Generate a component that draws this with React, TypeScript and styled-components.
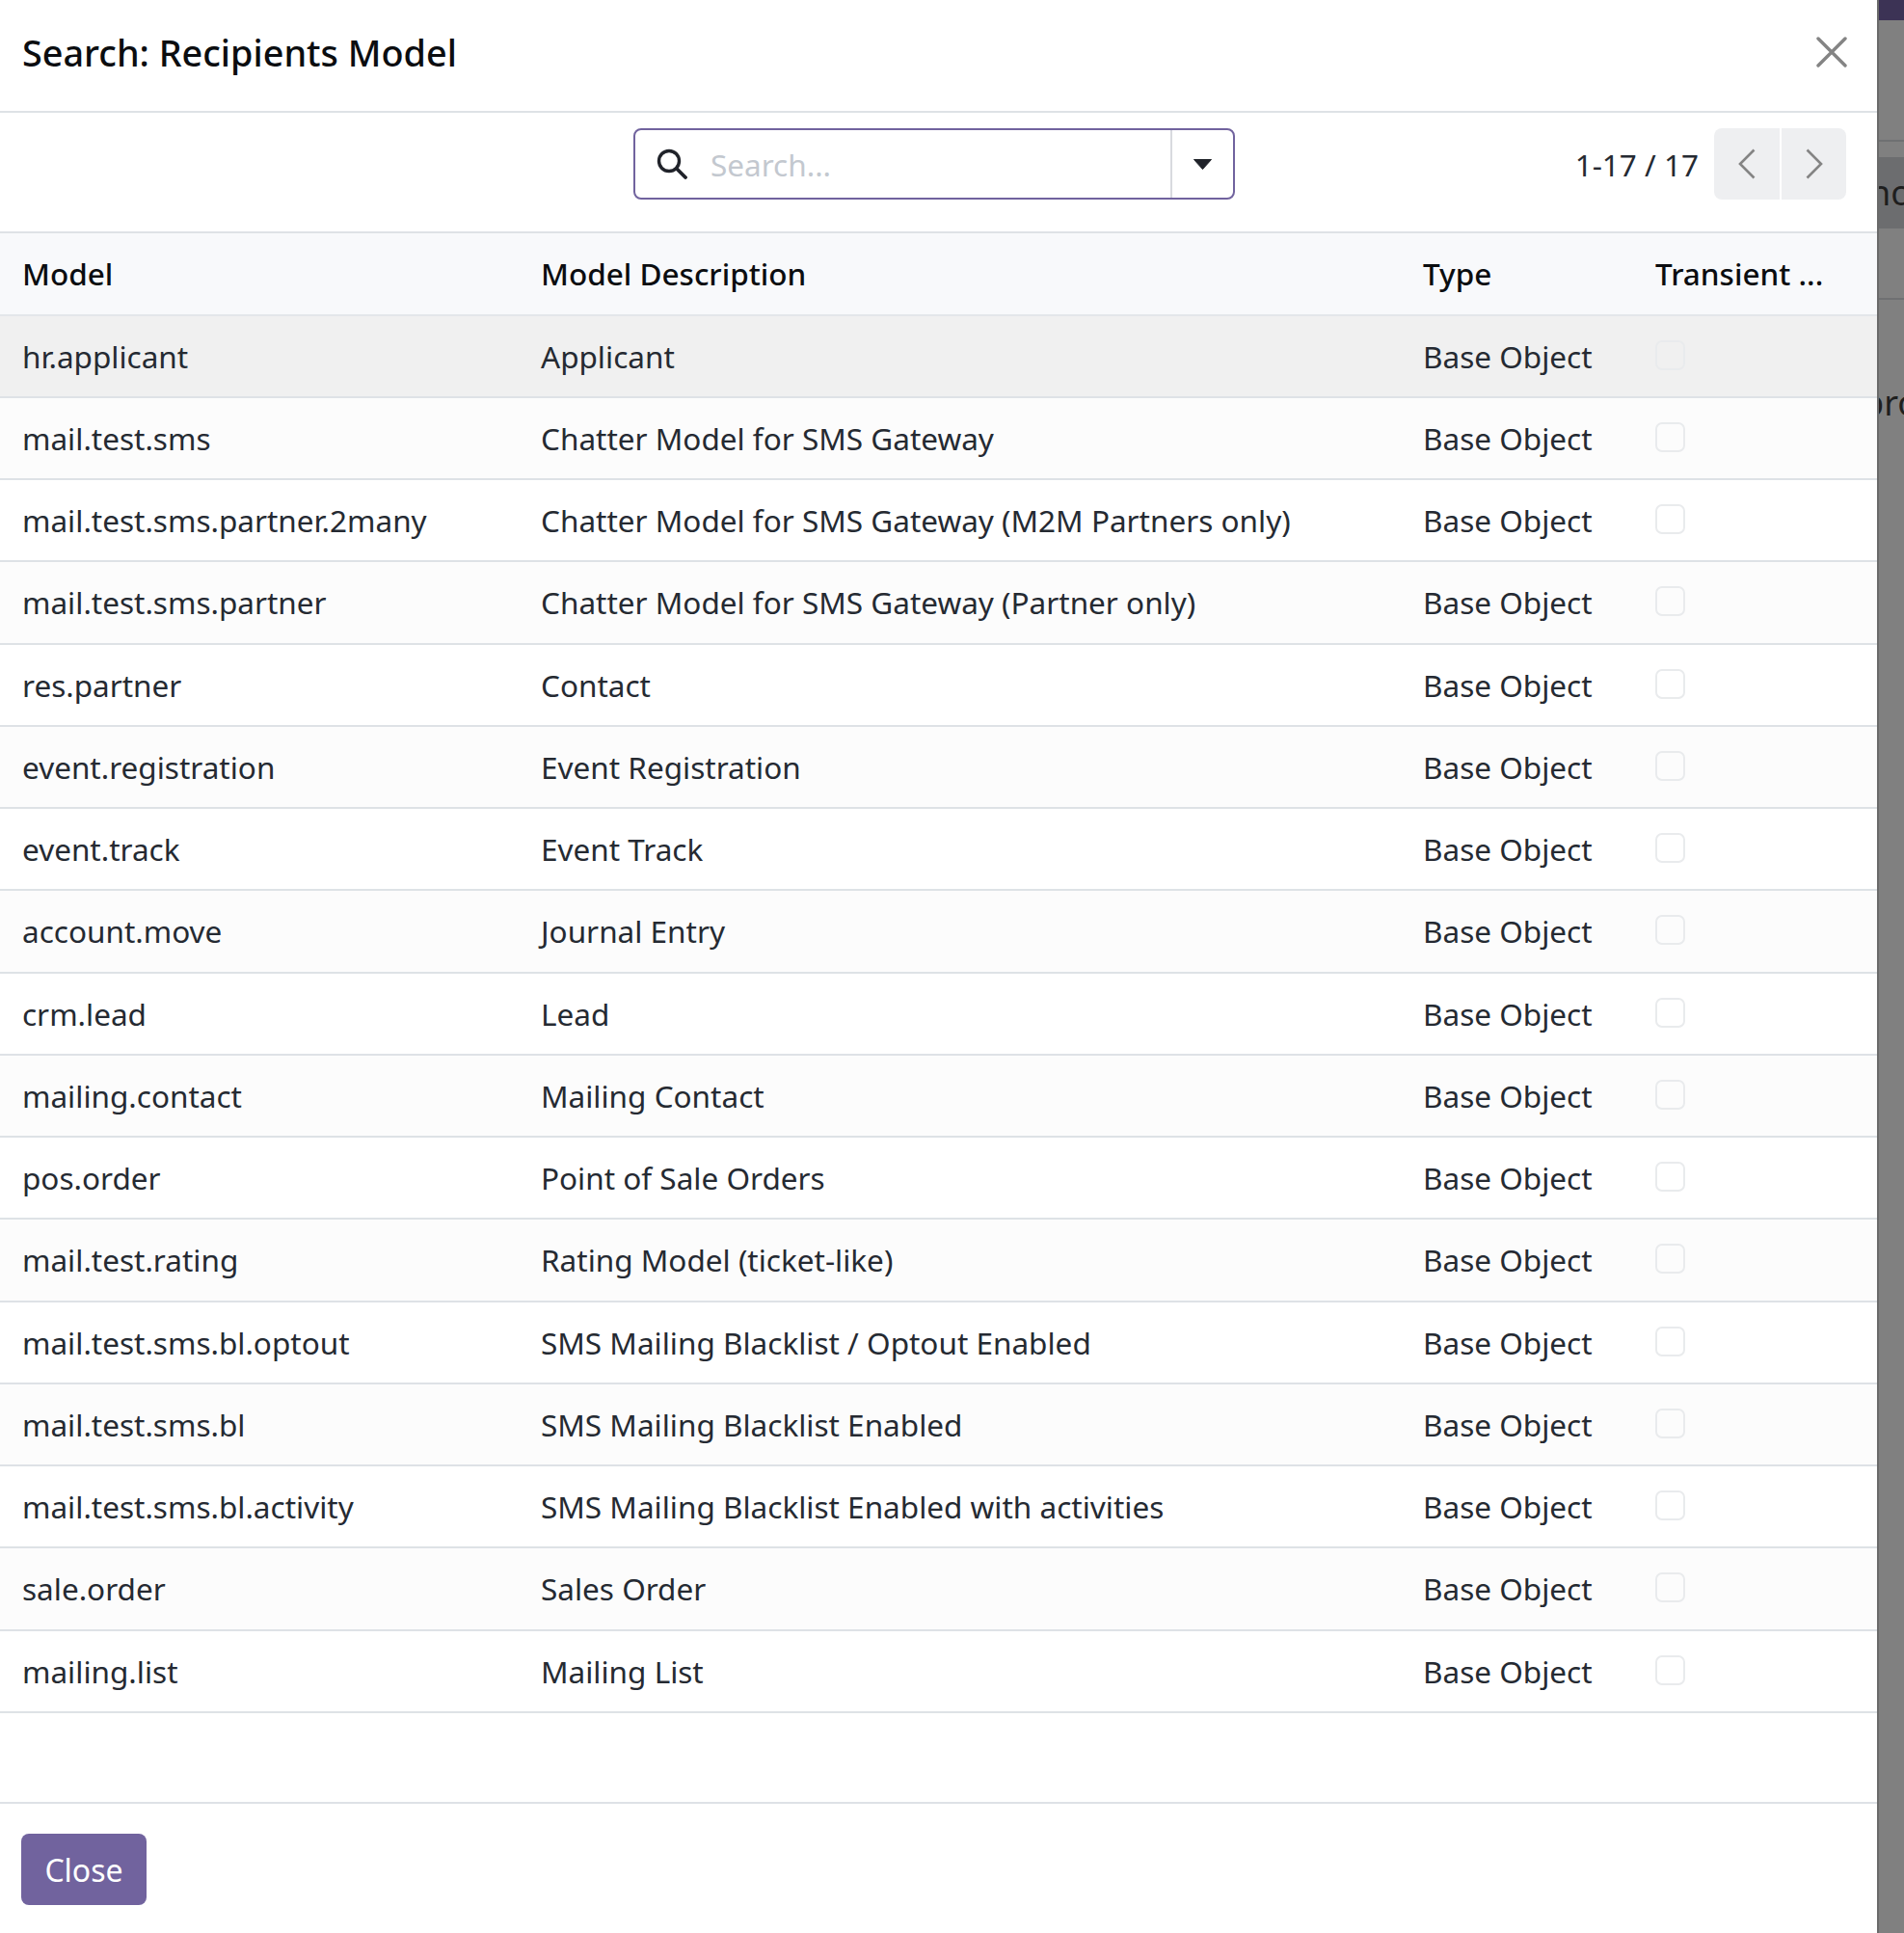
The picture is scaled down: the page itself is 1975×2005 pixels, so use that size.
import React from 'react';
import styled, { createGlobalStyle } from 'styled-components';

const GlobalStyle = createGlobalStyle`
  html, body {
    margin: 0;
    padding: 0;
    background: #808080;
  }
  body {
    font-family: 'Noto Sans', 'Liberation Sans', sans-serif;
    color: #252a32;
  }
`;

const Page = styled.div`
  display: flex;
  width: 1975px;
  height: 2005px;
  overflow: hidden;
`;

const Modal = styled.div`
  display: flex;
  flex-direction: column;
  width: 1947px;
  height: 2005px;
  flex: none;
  background: #fff;
`;

const Header = styled.header`
  display: flex;
  align-items: center;
  justify-content: space-between;
  height: 115px;
  padding: 0 31px 0 23px;
  border-bottom: 2px solid #dee2e6;
`;

const Title = styled.h4`
  margin: 0 0 7px;
  font-size: 37.8px;
  font-weight: 500;
  color: #0b0d10;
`;

const CloseIcon = styled.button`
  display: flex;
  margin-bottom: 7px;
  padding: 0;
  border: none;
  background: none;
`;

const Toolbar = styled.div`
  display: grid;
  grid-template-columns: 657px 624px 1fr;
  align-items: start;
  height: 107px;
  padding: 16px 32px 0 0;
  border-bottom: 2px solid #dee2e6;
`;

const SearchBox = styled.div`
  grid-column: 2;
  display: flex;
  align-items: stretch;
  height: 74px;
  box-sizing: border-box;
  border: 2px solid #71639e;
  border-radius: 8px;
`;

const SearchField = styled.div`
  flex: 1;
  display: flex;
  align-items: center;
  gap: 24px;
  padding-left: 22px;
`;

const Placeholder = styled.span`
  font-size: 31.5px;
  color: #c3c8cf;
`;

const CaretCell = styled.div`
  display: flex;
  align-items: center;
  justify-content: center;
  width: 63px;
  border-left: 2px solid #d8dadf;
`;

const Pager = styled.div`
  grid-column: 3;
  display: flex;
  align-items: center;
  justify-content: flex-end;
`;

const PagerText = styled.span`
  margin-right: 16px;
  font-size: 31.5px;
`;

const PagerButton = styled.button<{ $side: 'left' | 'right' }>`
  display: flex;
  align-items: center;
  justify-content: center;
  width: ${(p) => (p.$side === 'left' ? 68 : 67)}px;
  height: 74px;
  margin-left: ${(p) => (p.$side === 'right' ? 2 : 0)}px;
  padding: 0;
  border: none;
  background: #eeeff1;
  border-radius: ${(p) => (p.$side === 'left' ? '8px 0 0 8px' : '0 8px 8px 0')};
`;

const Table = styled.table`
  width: 1947px;
  border-collapse: separate;
  border-spacing: 0;
  table-layout: fixed;
`;

const HeadCell = styled.th`
  height: 85.5px;
  padding: 0 0 0 23px;
  box-sizing: border-box;
  text-align: left;
  font-size: 31.5px;
  font-weight: 500;
  color: #0b0d10;
  background: #f8f9fb;
  border-bottom: 2px solid #e3e6ea;
`;

const Row = styled.tr<{ $bg: string }>`
  background: ${(p) => p.$bg};
`;

const Cell = styled.td`
  height: 85.25px;
  padding: 0 0 0 23px;
  box-sizing: border-box;
  font-size: 31.5px;
  border-bottom: 2px solid #dee2e6;
  white-space: nowrap;
`;

const Check = styled.span`
  display: block;
  width: 31px;
  height: 31px;
  box-sizing: border-box;
  border: 2px solid #e9ebed;
  border-radius: 7px;
  background: transparent;
  position: relative;
  top: -1px;
`;

const Spacer = styled.div`
  flex: 1;
`;

const Footer = styled.footer`
  display: flex;
  align-items: center;
  height: 132px;
  padding: 2px 0 0 22px;
  border-top: 2px solid #dee2e6;
`;

const CloseButton = styled.button`
  width: 130px;
  height: 74px;
  padding: 0;
  border: none;
  border-radius: 8px;
  background: #71639e;
  color: #fff;
  font-family: inherit;
  font-size: 32px;
`;

const Backdrop = styled.div`
  flex: 1;
  display: flex;
  flex-direction: column;
  min-width: 0;
  overflow: hidden;
  background: #808080;
  border-left: 2px solid #6a6a6a;
  font-size: 36px;
  color: #1e1e1e;
`;

const TopBar = styled.div`
  height: 21px;
  background: #3c3355;
`;

const BackLine = styled.div<{ $mt: number }>`
  height: 2px;
  margin-top: ${(p) => p.$mt}px;
  background: #6f7072;
`;

const BackBand = styled.div`
  display: flex;
  align-items: center;
  height: 74px;
  margin-top: 16px;
  background: #6c6d6f;
`;

const BackText = styled.span<{ $shift: number; $mt?: number }>`
  display: block;
  white-space: nowrap;
  line-height: 50px;
  margin-left: ${(p) => p.$shift}px;
  margin-top: ${(p) => p.$mt || 0}px;
`;

const rows = [
  ['hr.applicant', 'Applicant'],
  ['mail.test.sms', 'Chatter Model for SMS Gateway'],
  ['mail.test.sms.partner.2many', 'Chatter Model for SMS Gateway (M2M Partners only)'],
  ['mail.test.sms.partner', 'Chatter Model for SMS Gateway (Partner only)'],
  ['res.partner', 'Contact'],
  ['event.registration', 'Event Registration'],
  ['event.track', 'Event Track'],
  ['account.move', 'Journal Entry'],
  ['crm.lead', 'Lead'],
  ['mailing.contact', 'Mailing Contact'],
  ['pos.order', 'Point of Sale Orders'],
  ['mail.test.rating', 'Rating Model (ticket-like)'],
  ['mail.test.sms.bl.optout', 'SMS Mailing Blacklist / Optout Enabled'],
  ['mail.test.sms.bl', 'SMS Mailing Blacklist Enabled'],
  ['mail.test.sms.bl.activity', 'SMS Mailing Blacklist Enabled with activities'],
  ['sale.order', 'Sales Order'],
  ['mailing.list', 'Mailing List'],
];

const rowColor = (i: number) => {
  if (i === 0) return '#f0f0f0';
  return i % 2 === 1 ? '#fcfcfc' : '#ffffff';
};

function App() {
  return (
    <Page>
      <GlobalStyle />
      <Modal>
        <Header>
          <Title>Search: Recipients Model</Title>
          <CloseIcon aria-label="Close">
            <svg width="32" height="32" viewBox="0 0 32 32">
              <path d="M2 2 L30 30 M30 2 L2 30" stroke="#848484" strokeWidth="3.4" strokeLinecap="round" fill="none" />
            </svg>
          </CloseIcon>
        </Header>
        <Toolbar>
          <SearchBox>
            <SearchField>
              <svg width="32" height="32" viewBox="0 0 32 32">
                <circle cx="13" cy="13" r="10.5" stroke="#20232a" strokeWidth="3.4" fill="none" />
                <path d="M21 21 L30 30" stroke="#20232a" strokeWidth="3.8" strokeLinecap="round" />
              </svg>
              <Placeholder>Search...</Placeholder>
            </SearchField>
            <CaretCell>
              <svg width="21" height="13" viewBox="0 0 21 13">
                <path d="M1.5 1.5 H19.5 L10.5 11.5 Z" fill="#20232a" stroke="#20232a" strokeLinejoin="round" />
              </svg>
            </CaretCell>
          </SearchBox>
          <Pager>
            <PagerText>1-17 / 17</PagerText>
            <PagerButton $side="left" aria-label="Previous">
              <svg width="18" height="32" viewBox="0 0 18 32">
                <path d="M16.5 1.5 L2 16 L16.5 30.5" stroke="#848484" strokeWidth="2.6" fill="none" />
              </svg>
            </PagerButton>
            <PagerButton $side="right" aria-label="Next">
              <svg width="18" height="32" viewBox="0 0 18 32">
                <path d="M1.5 1.5 L16 16 L1.5 30.5" stroke="#848484" strokeWidth="2.6" fill="none" />
              </svg>
            </PagerButton>
          </Pager>
        </Toolbar>
        <Table>
          <colgroup>
            <col style={{ width: 538 }} />
            <col style={{ width: 915 }} />
            <col style={{ width: 241 }} />
            <col />
          </colgroup>
          <thead>
            <tr>
              <HeadCell>Model</HeadCell>
              <HeadCell>Model Description</HeadCell>
              <HeadCell>Type</HeadCell>
              <HeadCell>Transient ...</HeadCell>
            </tr>
          </thead>
          <tbody>
            {rows.map((r, i) => (
              <Row key={r[0]} $bg={rowColor(i)}>
                <Cell>{r[0]}</Cell>
                <Cell>{r[1]}</Cell>
                <Cell>Base Object</Cell>
                <Cell>
                  <Check />
                </Cell>
              </Row>
            ))}
          </tbody>
        </Table>
        <Spacer />
        <Footer>
          <CloseButton>Close</CloseButton>
        </Footer>
      </Modal>
      <Backdrop>
        <TopBar />
        <BackLine $mt={124} />
        <BackBand>
          <BackText $shift={-10}>no</BackText>
        </BackBand>
        <BackLine $mt={72} />
        <BackText $shift={-17} $mt={82}>
          pro
        </BackText>
      </Backdrop>
    </Page>
  );
}

export default App;
